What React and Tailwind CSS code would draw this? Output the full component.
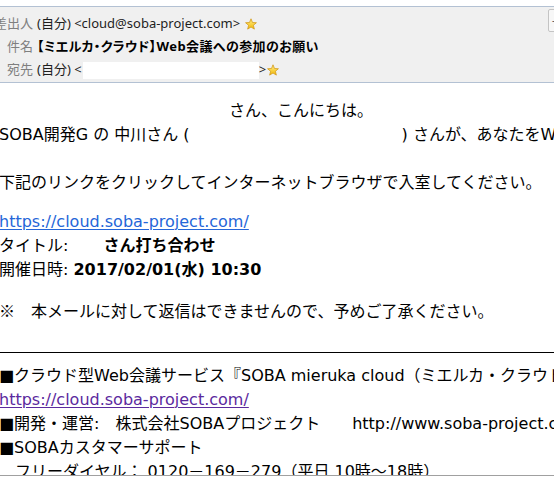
import React from "react";

function Star() {
  return (
    <svg width="12" height="12" viewBox="0 0 12 12" className="shrink-0">
      <defs>
        <linearGradient id="sg" x1="0" y1="0" x2="0" y2="1">
          <stop offset="0" stopColor="#fff08a" />
          <stop offset="1" stopColor="#f2b705" />
        </linearGradient>
      </defs>
      <path
        d="M6 0.8 L7.47 4.48 L11.42 4.74 L8.38 7.27 L9.35 11.11 L6 9 L2.65 11.11 L3.62 7.27 L0.58 4.74 L4.53 4.48 Z"
        fill="url(#sg)"
        stroke="#d39a1c"
        strokeWidth="0.8"
        strokeLinejoin="round"
      />
    </svg>
  );
}

function HeaderRow({ label, children, h = "h-[23px]" }) {
  return (
    <div className={`flex items-center ${h}`}>
      <div className="w-[33px] shrink-0 flex justify-end whitespace-nowrap text-[#7f7f7f]">
        {label}
      </div>
      <div className="ml-[4px] flex items-center whitespace-nowrap">{children}</div>
    </div>
  );
}

export default function App() {
  const body = { fontFamily: '"DejaVu Sans", "Noto Sans CJK JP", sans-serif' };
  const cjk = { fontFamily: '"Noto Sans CJK JP", sans-serif' };
  const head = { fontFamily: '"Noto Sans", "Noto Sans CJK JP", sans-serif' };
  return (
    <div className="relative w-[554px] h-[478px] overflow-hidden bg-white text-black">
      {/* cut-off line above header */}
      <div className="h-[6px] overflow-hidden">
        <div
          className="mt-[-13px] pl-[58px] text-[15px] leading-[16px] font-bold whitespace-nowrap"
          style={cjk}
        >
          ーー　ーー　ーー　ーー　ーー
        </div>
      </div>

      {/* message header */}
      <div
        className="flex border-t border-b border-[#b3c1d3] bg-[#f0f0f0] text-[13px] text-[#1e1e1e]"
        style={head}
      >
        <div className="flex-1 min-w-0 pt-[5px]">
          <HeaderRow label="差出人">
            <span>(自分) &lt;cloud@soba-project.com&gt;</span>
            <span className="ml-[5px]">
              <Star />
            </span>
          </HeaderRow>
          <HeaderRow label="件名">
            <span
              className="font-bold text-black tracking-[0.4px]"
              style={{ fontFeatureSettings: '"palt"' }}
            >
              【ミエルカ・クラウド】Web会議への参加のお願い
            </span>
          </HeaderRow>
          <HeaderRow label="宛先" h="h-[24px]">
            <span>(自分) &lt;</span>
            <span className="inline-block w-[176px] h-[17px] bg-white ml-[1px]" />
            <span>&gt;</span>
            <span className="ml-[1px]">
              <Star />
            </span>
          </HeaderRow>
        </div>
        <div className="shrink-0 w-[6px] pt-[2px]">
          <div className="w-[20px] h-[23px] rounded-[2px] border border-[#c4c4c4] bg-[#f7f7f7] text-[10px] leading-[21px] pl-[3px] text-[#555]">
            -
          </div>
        </div>
      </div>

      {/* body */}
      <div
        className="ml-[-1px] text-[16px] leading-[24px] whitespace-nowrap"
        style={body}
      >
        <div className="mt-[16px]">
          <span className="inline-block w-[230px]" />
          さん、こんにちは。
        </div>
        <div>
          SOBA開発G の 中川さん (<span className="inline-block w-[212px]" />) さんが、あなたをWeb会議に招待しています。
        </div>
        <div className="h-[24px]" />
        <div>下記のリンクをクリックしてインターネットブラウザで入室してください。</div>
        <div className="mt-[15px]">
          <span className="text-[#2566d8] underline decoration-1 underline-offset-[2px]">
            https://cloud.soba-project.com/
          </span>
        </div>
        <div>
          タイトル:<span className="inline-block w-[35px]" />
          <span className="font-bold">さん打ち合わせ</span>
        </div>
        <div>
          開催日時: <span className="font-bold">2017/02/01(水) 10:30</span>
        </div>
        <div className="mt-[16px]">
          <span style={cjk}>※</span>　本メールに対して返信はできませんので、予めご了承ください。
        </div>

        <div className="h-px bg-black mt-[28px]" />

        <div className="mt-[11px]">■クラウド型Web会議サービス『SOBA mieruka cloud（ミエルカ・クラウド）』</div>
        <div>
          <span className="text-[#5b2a9e] underline decoration-1 underline-offset-[2px]">
            https://cloud.soba-project.com/
          </span>
        </div>
        <div>■開発・運営:　株式会社SOBAプロジェクト　　http://www.soba-project.com/</div>
        <div>■SOBAカスタマーサポート</div>
        <div>　フリーダイヤル： 0120－169－279（平日 10時～18時）</div>
      </div>

      {/* bottom pane edge */}
      <div className="absolute left-0 right-0 top-[475px] h-[3px] border-t border-[#a0a0a0] bg-white" />
    </div>
  );
}
